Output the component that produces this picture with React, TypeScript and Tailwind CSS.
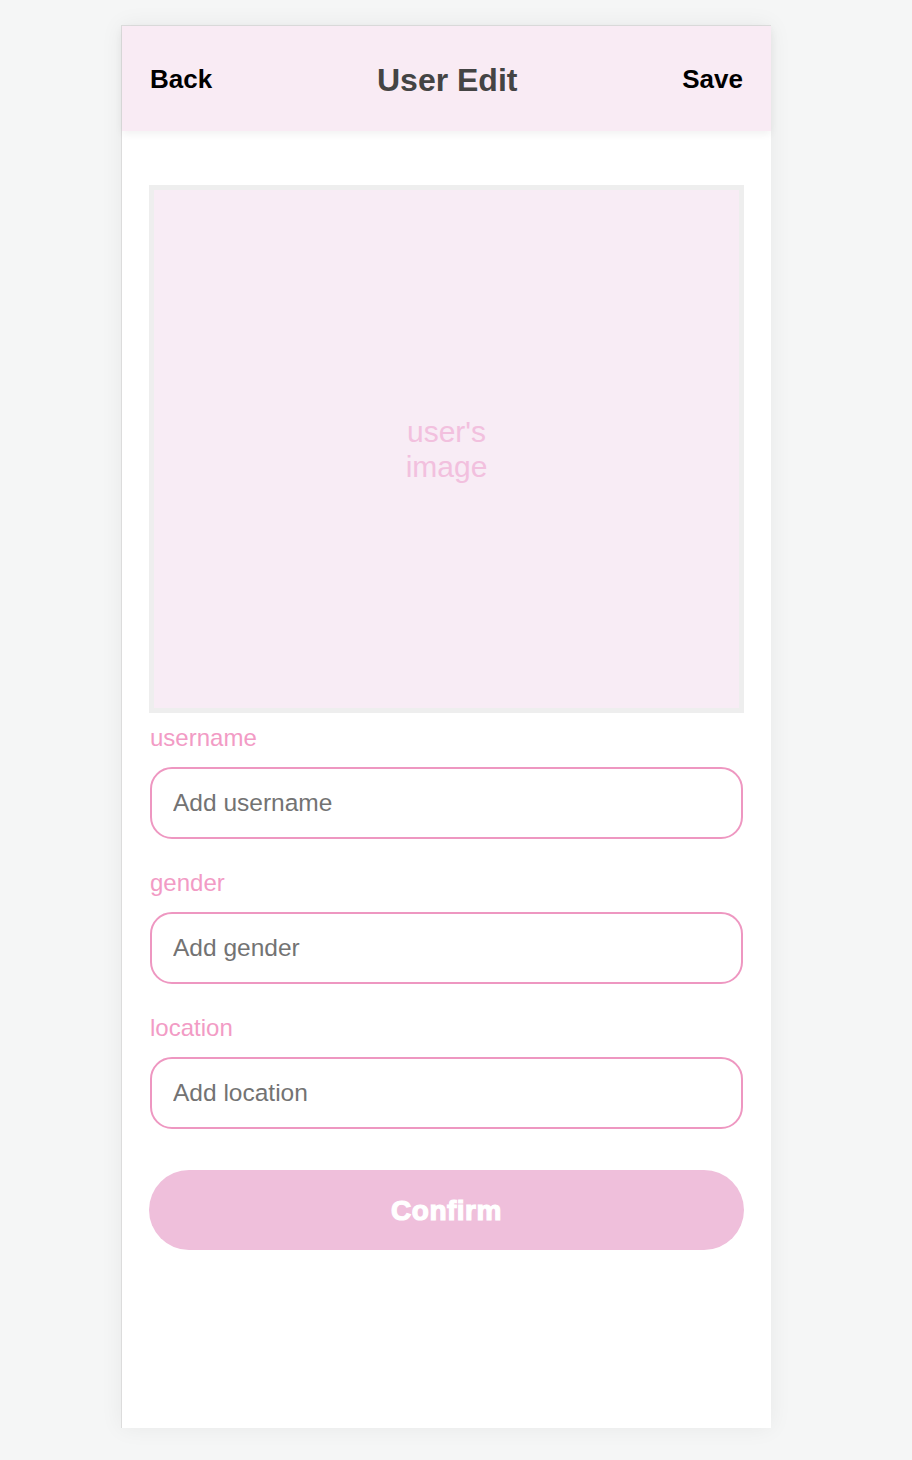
import React from "react";

const font = { fontFamily: '"Liberation Sans", Arial, sans-serif' };

function Field({ label, placeholder, first }: { label: string; placeholder: string; first?: boolean }) {
  return (
    <div className={first ? "mt-[12px]" : "mt-[31px]"}>
      <div className="h-[26px] text-[24px] leading-[26px] text-[#f29bc5]">{label}</div>
      <input
        placeholder={placeholder}
        className="mt-4 box-border block h-[72px] w-full rounded-[22px] border-2 border-[#ee97c1] bg-white px-[21px] text-[24.5px] text-[#333] outline-none placeholder:text-[#737373]"
        style={font}
      />
    </div>
  );
}

export default function App() {
  return (
    <div className="min-h-[1460px] w-full bg-[#f5f6f6] pt-[25px]" style={font}>
      <div className="ml-[121px] flex h-[1403px] w-[650px] flex-col border-l border-t border-[#dcdcdc] bg-white shadow-[0_0_22px_rgba(0,0,0,0.06)]">
        <div className="flex h-[105px] items-center justify-between bg-[#f9ebf4] px-[28px] pt-[2px] shadow-[0_3px_8px_rgba(0,0,0,0.06)]">
          <span className="text-[26px] font-bold text-black">Back</span>
          <span className="text-[32px] font-bold text-[#444444]">User Edit</span>
          <span className="text-[26px] font-bold text-black">Save</span>
        </div>
        <div className="px-[27px]">
          <div className="mt-[54px] flex h-[528px] w-full items-center justify-center border-[5px] border-[#eeeeee] bg-[#f8ecf5]">
            <div className="text-center text-[30px] leading-[35px] text-[#f2c0de]">
              user's
              <br />
              image
            </div>
          </div>
          <div className="px-px">
            <Field first label="username" placeholder="Add username" />
            <Field label="gender" placeholder="Add gender" />
            <Field label="location" placeholder="Add location" />
          </div>
          <button className="mt-[41px] flex h-[80px] w-full items-center justify-center rounded-full bg-[#efbfdb] pt-[2px] text-[28px] font-bold tracking-[0.5px] text-white [-webkit-text-stroke:1.2px_white]">
            Confirm
          </button>
        </div>
      </div>
    </div>
  );
}
